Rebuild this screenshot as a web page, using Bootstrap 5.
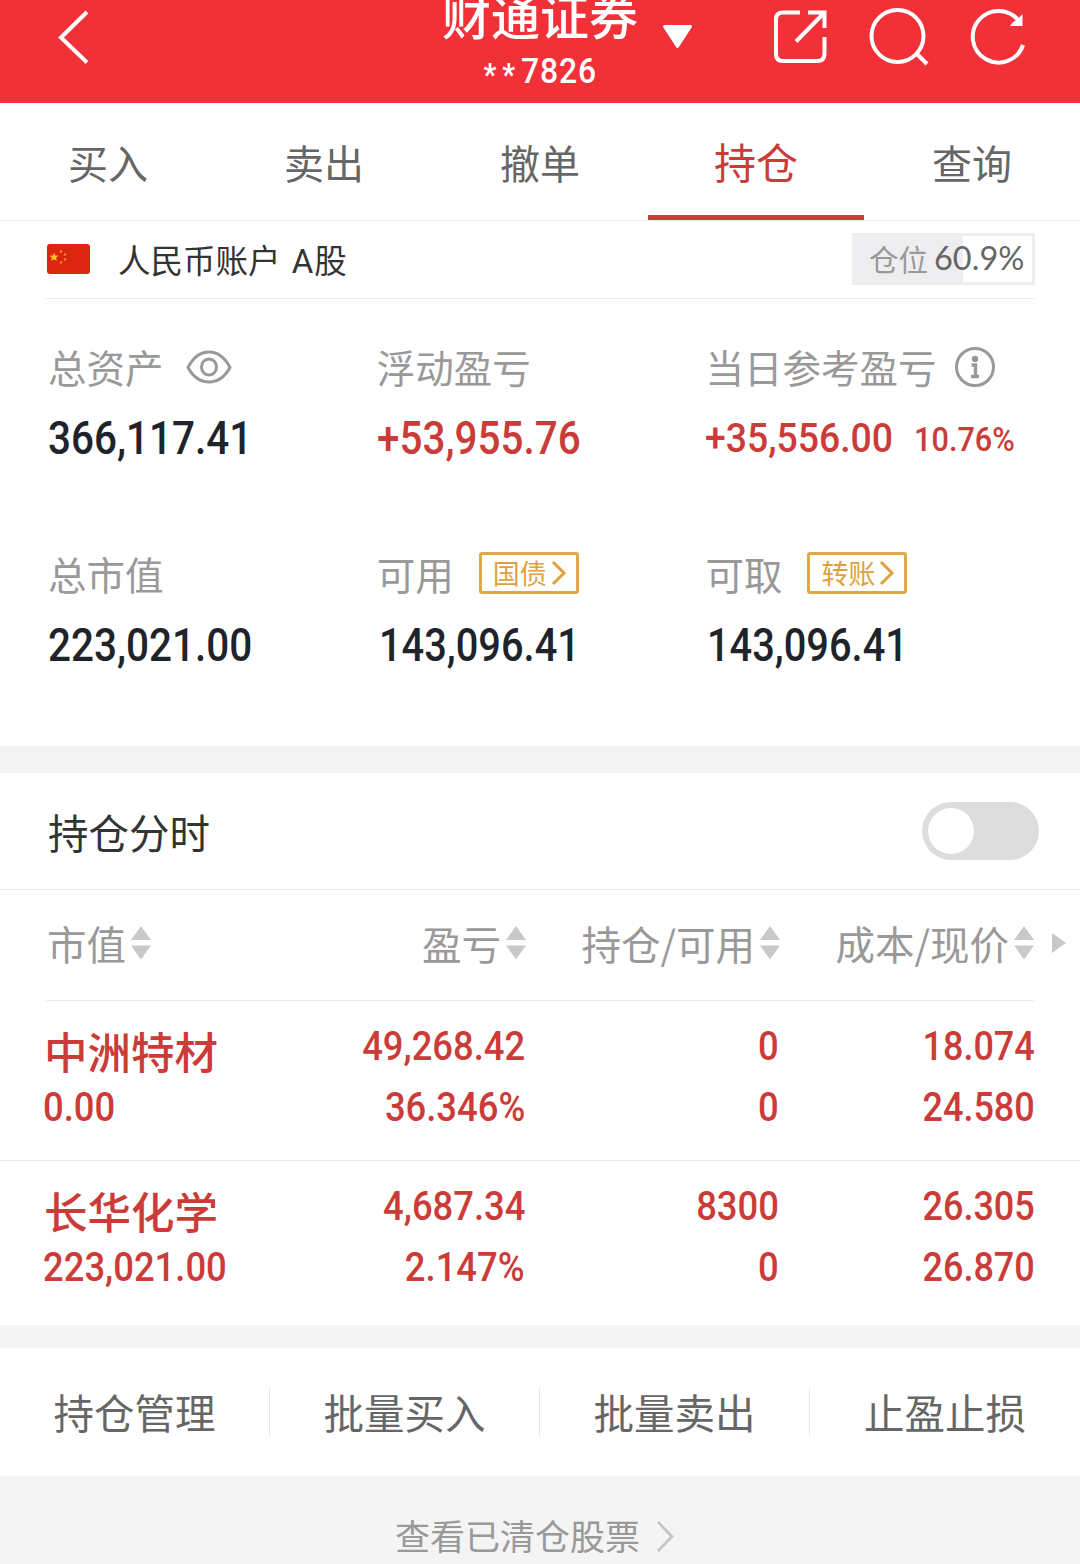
<!DOCTYPE html>
<html lang="zh-CN">
<head>
<meta charset="utf-8">
<meta name="viewport" content="width=device-width, initial-scale=1">
<title>持仓</title>
<link href="https://cdn.jsdelivr.net/npm/bootstrap@5.3.0/dist/css/bootstrap.min.css" rel="stylesheet">
<style>
  html, body { height: 1564px; overflow: hidden; }
  body { font-family: "Noto Sans CJK SC", sans-serif; background: #f4f4f4; color: #333; line-height: 1; }
  svg { display: block; flex: none; }
  .app { width: 1080px; }
  /* narrow numerals */
  .din { font-family: Roboto, sans-serif; font-weight: 500; display: inline-block; transform: scaleX(.91); transform-origin: left center; white-space: nowrap; }
  .din-end { transform-origin: right center; }
  .up { color: #cb3c39; }

  .topbar { height: 103px; background: #f23038; color: #fff; }
  .side { width: 440px; }
  .broker { width: 200px; }
  .broker-name { font-size: 49px; font-weight: 500; height: 49px; line-height: 49px; margin-top: -11px; white-space: nowrap; }
  .broker-no { font-size: 35px; line-height: 40px; margin-top: 14px; transform-origin: center; letter-spacing: 1px; }
  .stars { position: relative; top: 2px; font-size: 31px; font-weight: 700; letter-spacing: 6.5px; }

  .tabs { height: 118px; border-bottom: 1px solid #ebebeb; }
  .tabs a { flex: 1; font-size: 40px; line-height: 118px; text-align: center; color: #666; text-decoration: none; border-bottom: 5px solid transparent; height: 117px; }
  .tabs a.on { color: #cb3c39; font-size: 42px; line-height: 116px; border-color: #cb3c39; }

  .account { height: 78px; margin: 0 46px; border-bottom: 1px solid #ececec; font-size: 32.5px; }
  .account-name { margin-left: 28px; padding-top: 2px; white-space: nowrap; word-spacing: 4px; }
  .account-name span { font-family: Roboto, sans-serif; font-size: 33px; margin-right: 1px; }
  .position-rate { width: 183px; height: 52px; border: 3px solid #eeeef0; margin: -2px -1px 0 0; background: linear-gradient(90deg, #eeeef0 108px, #fff 108px); font-size: 29.5px; line-height: 28px; color: #999; padding: 0 0 2px 14px; white-space: nowrap; }
  .position-rate span { font-family: Lato, sans-serif; font-size: 32.5px; color: #666; margin-left: 6px; }

  .assets { height: 447px; padding: 38px 46px 0 48px; }
  .assets-line { height: 207px; }
  .cell { width: 328.7px; flex: none; }
  .cap { font-size: 38.5px; height: 58px; color: #999; white-space: nowrap; }
  .val { font-size: 46px; height: 78px; line-height: 78px; color: #20242a; }
  .val .din { transform: scaleX(.88); }
  .val .shift { margin-left: 2px; transform: scaleX(.865); }
  .val .val-day { font-size: 41.5px; line-height: 86px; transform: scaleX(.9); }
  .val .val-pct { font-size: 33px; line-height: 90px; transform: scaleX(.93); margin-left: 0; }
  .val.d-flex { align-items: flex-start; }
  .chip { border: 3px solid #dfa94a; border-radius: 3px; width: 100px; height: 42px; font-size: 27px; color: #dfa13c; margin-left: 25px; padding-left: 11px; line-height: 34px; }

  .gap-a { height: 27px; }
  .gap-b { height: 23px; }
  .timeline { height: 117px; padding: 0 41px 0 48px; border-bottom: 1px solid #ebebeb; font-size: 40.5px; }
  .timeline span { padding-top: 2px; }
  .switch { width: 117px; height: 58px; border-radius: 29px; background: #ddd; padding: 6px; }
  .knob { width: 46px; height: 46px; border-radius: 50%; background: #fff; }

  .c1 { width: 232px; }
  .c2 { width: 248px; }
  .c3 { width: 254px; }
  .c4 { width: 255px; }
  .heads { height: 110px; padding: 0 0 5px 47px; font-size: 39.5px; color: #999; white-space: nowrap; }
  .heads .c2, .heads .c3 { padding-right: 1px; }
  .heads .c4 { padding-right: 2px; }
  .heads svg { margin: 1px 0 0 5px; }
  .heads .more { margin: 0 0 0 15px; }
  .stock { height: 159px; padding: 18px 0 0 45px; }
  .stock > div { height: 61px; }
  .stock .din { font-size: 40px; line-height: 56px; }
  .stock .c1 .din { margin-left: -2px; }
  .stock .c4 .din { transform: scaleX(.9); margin-right: -1px; }
  .stock-name { font-size: 43.5px; font-weight: 500; line-height: 63px; white-space: nowrap; }
  .stock .stock-name { text-indent: -1px; }
  .rule { height: 1px; background: #ebebeb; }

  .acts { height: 128px; }
  .acts div { width: 270px; height: 48px; border-right: 1px solid #e6e6e6; text-align: center; font-size: 40.5px; line-height: 48px; color: #666; white-space: nowrap; }
  .acts div:last-child { border: 0; }
  .cleared { height: 88px; padding: 32px 7px 0 0; font-size: 35px; color: #999; }
</style>
<script src="https://cdn.jsdelivr.net/npm/bootstrap@5.3.0/dist/js/bootstrap.bundle.min.js"></script>
</head>
<body>
<div class="app">
  <header class="topbar d-flex">
    <div class="side">
      <svg width="100" height="76" fill="none" stroke="#fff" stroke-width="4"><path d="M87 12 61 37.500 87 62.500"/></svg>
    </div>
    <div class="broker d-flex flex-column align-items-center">
      <div class="broker-name">财通证券</div>
      <div class="din broker-no"><span class="stars">**</span>7826</div>
    </div>
    <div class="side d-flex">
      <svg width="60" height="76" fill="#fff" stroke="#fff" stroke-width="3" stroke-linejoin="round"><path d="M24.500 26.500H50.500L37.500 46.500Z"/></svg>
      <svg width="160" height="76" fill="none" stroke="#fff" stroke-width="4"><path d="M100 12.500H83Q76 12.500 76 19.500V54Q76 61 83 61H117Q124.500 61 124.500 54V37"/><path d="M108 12.500H124.500V28M123.500 13.500 96 41.500"/></svg>
      <svg width="100" height="76" fill="none" stroke="#fff" stroke-width="4"><circle cx="37.500" cy="36" r="26"/><path d="M56 53 67 64"/></svg>
      <svg width="110" height="76" fill="none" stroke="#fff" stroke-width="4"><path d="M59 21A25.800 25.800 0 1 0 63 45"/><path d="M62.500 14V26H50L53 22 57 20Z" fill="#fff" stroke="none"/></svg>
    </div>
  </header>

  <nav class="tabs d-flex bg-white">
    <a href="#">买入</a><a href="#">卖出</a><a href="#">撤单</a><a href="#" class="on">持仓</a><a href="#">查询</a>
  </nav>

  <main class="bg-white">
    <div class="account d-flex align-items-center">
      <svg width="44" height="31"><rect x="1" y="0" width="43" height="30" rx="3" fill="#dd2611"/><path d="M8 8.500 9.300 11.500 12.500 11.700 10 13.800 10.900 17 8 15.200 5.200 17 6 13.800 3.600 11.700 6.800 11.500Z" fill="#ffc61a"/><g fill="#f08a1c"><circle cx="15" cy="7.500" r="1.300"/><circle cx="19" cy="10.500" r="1.300"/><circle cx="19" cy="15.500" r="1.300"/><circle cx="15" cy="18.500" r="1.300"/></g></svg>
      <div class="account-name">人民币账户 <span>A</span>股</div>
      <div class="position-rate ms-auto d-flex align-items-center">仓位<span>60.9%</span></div>
    </div>

    <section class="assets">
      <div class="assets-line d-flex">
        <div class="cell">
          <div class="cap d-flex align-items-center">总资产
            <svg width="46" height="36" style="margin-left:22px" fill="none" stroke="#999" stroke-width="3"><path d="M2 19.500Q10 4 23 4T44 19.500Q36 34 23 34T2 19.500Z"/><ellipse cx="23" cy="19" rx="7.500" ry="8"/></svg>
          </div>
          <div class="val"><span class="din">366,117.41</span></div>
        </div>
        <div class="cell">
          <div class="cap d-flex align-items-center">浮动盈亏</div>
          <div class="val"><span class="din up">+53,955.76</span></div>
        </div>
        <div class="cell">
          <div class="cap d-flex align-items-center">当日参考盈亏
            <svg width="42" height="42" style="margin-left:18px" fill="none" stroke="#999" stroke-width="3"><circle cx="21" cy="22" r="18.500"/><circle cx="21" cy="14" r="3.200" fill="#999" stroke="none"/><path d="M17.500 20H21.500V31.500M17 31.500H25" stroke-width="3.400"/></svg>
          </div>
          <div class="val d-flex"><span class="din up val-day">+35,556.00</span><span class="din up val-pct">10.76%</span></div>
        </div>
      </div>
      <div class="assets-line d-flex">
        <div class="cell">
          <div class="cap d-flex align-items-center">总市值</div>
          <div class="val"><span class="din">223,021.00</span></div>
        </div>
        <div class="cell">
          <div class="cap d-flex align-items-center">可用<span class="chip d-flex align-items-center">国债<svg class="ms-1" width="16" height="26" fill="none" stroke="#dfa13c" stroke-width="3"><path d="M2 2 13 13 2 24"/></svg></span></div>
          <div class="val"><span class="din shift">143,096.41</span></div>
        </div>
        <div class="cell">
          <div class="cap d-flex align-items-center">可取<span class="chip d-flex align-items-center">转账<svg class="ms-1" width="16" height="26" fill="none" stroke="#dfa13c" stroke-width="3"><path d="M2 2 13 13 2 24"/></svg></span></div>
          <div class="val"><span class="din shift">143,096.41</span></div>
        </div>
      </div>
    </section>
  </main>

  <div class="gap-a"></div>

  <section class="bg-white">
    <div class="timeline d-flex align-items-center justify-content-between">
      <span>持仓分时</span>
      <div class="switch"><div class="knob"></div></div>
    </div>
    <div class="heads d-flex align-items-center">
      <div class="c1 d-flex align-items-center">市值<svg width="20" height="34" fill="#c9c9c9"><path d="M10 0 20 14H0ZM0 19.500H20L10 33.500Z"/></svg></div>
      <div class="c2 d-flex align-items-center justify-content-end">盈亏<svg width="20" height="34" fill="#c9c9c9"><path d="M10 0 20 14H0ZM0 19.500H20L10 33.500Z"/></svg></div>
      <div class="c3 d-flex align-items-center justify-content-end">持仓/可用<svg width="20" height="34" fill="#c9c9c9"><path d="M10 0 20 14H0ZM0 19.500H20L10 33.500Z"/></svg></div>
      <div class="c4 d-flex align-items-center justify-content-end">成本/现价<svg width="20" height="34" fill="#c9c9c9"><path d="M10 0 20 14H0ZM0 19.500H20L10 33.500Z"/></svg></div>
      <svg class="more" width="15" height="22" fill="#c9c9c9"><path d="M1 1 15 11 1 21Z"/></svg>
    </div>
    <div class="rule" style="margin:0 46px"></div>
    <div class="stock up">
      <div class="d-flex"><div class="c1 stock-name">中洲特材</div><div class="c2 text-end"><span class="din din-end">49,268.42</span></div><div class="c3 text-end"><span class="din din-end">0</span></div><div class="c4 text-end"><span class="din din-end">18.074</span></div></div>
      <div class="d-flex"><div class="c1"><span class="din">0.00</span></div><div class="c2 text-end"><span class="din din-end">36.346%</span></div><div class="c3 text-end"><span class="din din-end">0</span></div><div class="c4 text-end"><span class="din din-end">24.580</span></div></div>
    </div>
    <div class="rule"></div>
    <div class="stock up" style="height:164px">
      <div class="d-flex"><div class="c1 stock-name">长华化学</div><div class="c2 text-end"><span class="din din-end">4,687.34</span></div><div class="c3 text-end"><span class="din din-end">8300</span></div><div class="c4 text-end"><span class="din din-end">26.305</span></div></div>
      <div class="d-flex"><div class="c1"><span class="din">223,021.00</span></div><div class="c2 text-end"><span class="din din-end">2.147%</span></div><div class="c3 text-end"><span class="din din-end">0</span></div><div class="c4 text-end"><span class="din din-end">26.870</span></div></div>
    </div>
  </section>

  <div class="gap-b"></div>

  <section class="acts d-flex align-items-center bg-white">
    <div>持仓管理</div><div>批量买入</div><div>批量卖出</div><div>止盈止损</div>
  </section>

  <footer class="cleared d-flex justify-content-center align-items-start">
    <div style="line-height:53px">查看已清仓股票</div>
    <svg class="ms-3" width="22" height="56" fill="none" stroke="#c4c4c4" stroke-width="2.600"><path d="M2 14 16 28.500 2 43"/></svg>
  </footer>
</div>
</body>
</html>
